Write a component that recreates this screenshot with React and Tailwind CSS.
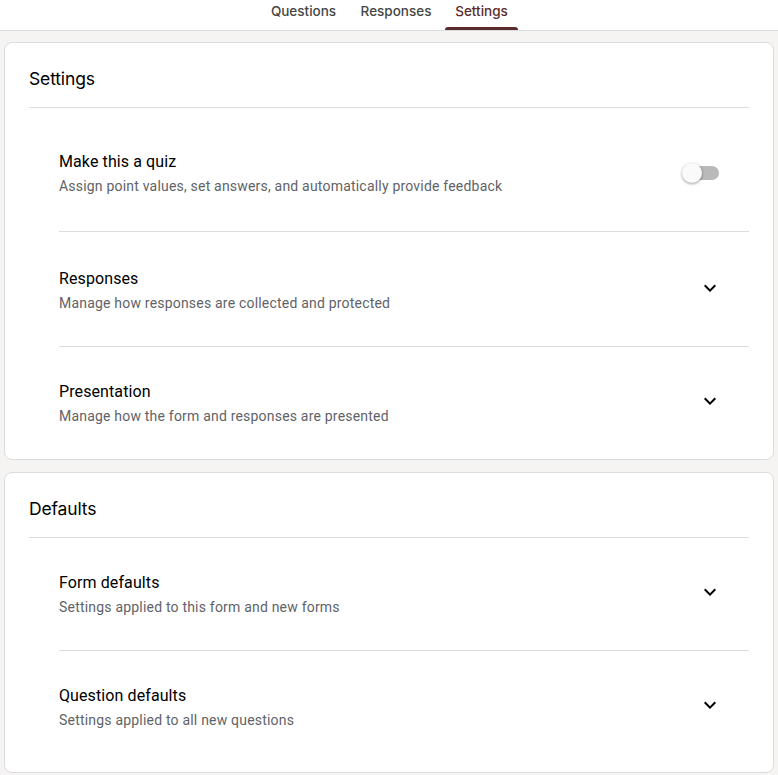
import { useState } from 'react';
import clsx from 'clsx';

const tabs = [
    { name: 'Questions', width: 'w-[67px]' },
    { name: 'Responses', width: 'w-[70px]' },
    { name: 'Settings', width: 'w-[53px]' },
];

const Chevron = () => (
    <svg viewBox="0 0 24 24" className="mt-[9px] h-6 w-6 fill-black">
        <path d="M7.41 8.59 12 13.17l4.59-4.58L18 10l-6 6-6-6z" />
    </svg>
);

const Row = ({ title, description, className, children }) => (
    <div className={clsx("ml-[30px] flex justify-between pr-[27px]", className)}>
        <div>
            <h3 className="text-base leading-6 tracking-[0.1px] text-black">{title}</h3>
            <p className="text-sm leading-6 tracking-[0.2px] text-[#5f6368]">{description}</p>
        </div>
        {children}
    </div>
);

const Card = ({ title, className, children }) => (
    <section className={clsx("mx-1 rounded-lg border border-[#dadce0] bg-white px-6", className)}>
        <h2 className="h-[65px] border-b border-[#dadce0] pt-6 font-['Inter',sans-serif] text-[17.5px] leading-6 tracking-[-0.15px] text-black">{title}</h2>
        {children}
    </section>
);

const App = () => {
    const [activeTab, setActiveTab] = useState('Settings');
    const [isQuiz, setIsQuiz] = useState(false);

    return (
        <div className="h-[775px] overflow-hidden bg-[#f5f4f3] font-['Roboto',sans-serif]">
            <nav className="flex h-[31px] justify-center gap-1 border-b border-[#dadce0] bg-white font-['Inter',sans-serif]">
                {tabs.map((tab) => (
                    <button
                        key={tab.name}
                        onClick={() => setActiveTab(tab.name)}
                        className={clsx(
                            "box-content flex h-[30px] flex-col items-center px-[10px] text-[13.5px] font-medium leading-6 tracking-[0px] whitespace-nowrap",
                            tab.width,
                            activeTab === tab.name ? "text-[#5b2b29]" : "text-[#444746]"
                        )}
                    >
                        <span className="-mt-px">{tab.name}</span>
                        {activeTab === tab.name && <span className="-mx-[10px] mt-auto h-[3px] w-[73px] rounded-t-[3px] bg-[#5b2b29]" />}
                    </button>
                ))}
            </nav>

            <Card title="Settings" className="mt-[11px] h-[418px]">
                <Row title="Make this a quiz" description="Assign point values, set answers, and automatically provide feedback" className="h-[124px] border-b border-[#dadce0] pt-[42px]">
                    <button
                        role="switch"
                        aria-checked={isQuiz}
                        aria-label="Make this a quiz"
                        onClick={() => setIsQuiz(!isQuiz)}
                        className="mt-4 mr-[3px] flex h-[14px] w-9 items-center rounded-full bg-[#b9b9b9]"
                    >
                        <span className={clsx("h-5 w-5 shrink-0 rounded-full bg-[#fafafa] shadow-[0_1px_3px_rgba(0,0,0,0.4)]", isQuiz ? "translate-x-[18px]" : "-translate-x-px")} />
                    </button>
                </Row>
                <Row title="Responses" description="Manage how responses are collected and protected" className="h-[115px] border-b border-[#dadce0] pt-[35px]">
                    <Chevron />
                </Row>
                <Row title="Presentation" description="Manage how the form and responses are presented" className="pt-[33px]">
                    <Chevron />
                </Row>
            </Card>

            <Card title="Defaults" className="mt-3 h-[301px]">
                <Row title="Form defaults" description="Settings applied to this form and new forms" className="h-[113px] border-b border-[#dadce0] pt-[33px]">
                    <Chevron />
                </Row>
                <Row title="Question defaults" description="Settings applied to all new questions" className="pt-[33px]">
                    <Chevron />
                </Row>
            </Card>
        </div>
    );
};

export default App;
